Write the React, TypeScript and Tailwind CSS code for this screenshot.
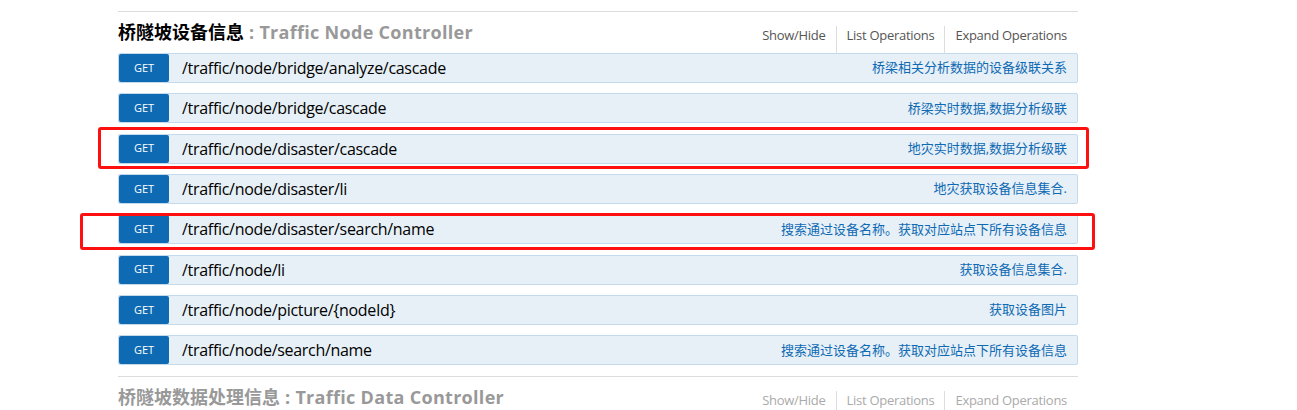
import React from "react";

const ops = [
  { path: "/traffic/node/bridge/analyze/cascade", desc: "桥梁相关分析数据的设备级联关系" },
  { path: "/traffic/node/bridge/cascade", desc: "桥梁实时数据,数据分析级联" },
  { path: "/traffic/node/disaster/cascade", desc: "地灾实时数据,数据分析级联" },
  { path: "/traffic/node/disaster/li", desc: "地灾获取设备信息集合." },
  { path: "/traffic/node/disaster/search/name", desc: "搜索通过设备名称。获取对应站点下所有设备信息" },
  { path: "/traffic/node/li", desc: "获取设备信息集合." },
  { path: "/traffic/node/picture/{nodeId}", desc: "获取设备图片" },
  { path: "/traffic/node/search/name", desc: "搜索通过设备名称。获取对应站点下所有设备信息" },
];

const Options = ({ active }: { active: boolean }) => {
  const color = active ? "text-[#555555]" : "text-[#aaaaaa]";
  return (
    <ul className={`flex pt-[14px] text-[13px] leading-[18px] tracking-[-0.28px] ${color}`}>
      <li className="border-r border-[#dddddd] px-[10px]">Show/Hide</li>
      <li className="border-r border-[#dddddd] px-[10px]">List Operations</li>
      <li className="pl-[10px] pr-[11px]">Expand Operations</li>
    </ul>
  );
};

const Heading = ({
  name,
  desc,
  active,
}: {
  name: string;
  desc: string;
  active: boolean;
}) => (
  <div className="flex h-[41px] justify-between">
    <h2 className="pt-[8px] text-[18px] font-bold leading-[24px] text-[#999999]">
      <span className={active ? "text-black" : ""}>{name}</span>
      <span className="tracking-[0.3px]"> : {desc}</span>
    </h2>
    <Options active={active} />
  </div>
);

const App = () => {
  return (
    <div className="relative h-[410px] w-full overflow-hidden bg-white font-['Open_Sans','Noto_Sans_CJK_SC',sans-serif]">
      <div className="ml-[118px] w-[960px]">
        {/* bottom edge of the collapsed resource above */}
        <div className="h-[12px] border-b border-[#dddddd]" />

        <div className="border-b border-[#dddddd] pb-[0.6px]">
          <Heading name="桥隧坡设备信息" desc="Traffic Node Controller" active={true} />
          <ul className="flex flex-col">
            {ops.map((op) => (
              <li
                key={op.path}
                className="mb-[10.34px] flex h-[30px] items-center rounded-[2px] border border-[#c3d9ec] bg-[#e7f0f7]"
              >
                <span className="flex h-full w-[50px] items-center justify-center rounded-[2px] bg-[#0f6ab4] text-[11px] text-white">
                  GET
                </span>
                <span className="pl-[13px] text-[16px] tracking-[-0.3px] text-black">{op.path}</span>
                <span className="ml-auto pr-[10px] text-[13px] text-[#0f6ab4]">{op.desc}</span>
              </li>
            ))}
          </ul>
        </div>

        <Heading name="桥隧坡数据处理信息" desc="Traffic Data Controller" active={false} />
      </div>

      {/* red annotation boxes */}
      <div className="absolute left-[98px] top-[127px] h-[42px] w-[991px] rounded-[3px] border-[3px] border-[#ff1010]" />
      <div className="absolute left-[80px] top-[213px] h-[37px] w-[1015px] rounded-[3px] border-[3px] border-[#ff1010]" />
    </div>
  );
};

export default App;
